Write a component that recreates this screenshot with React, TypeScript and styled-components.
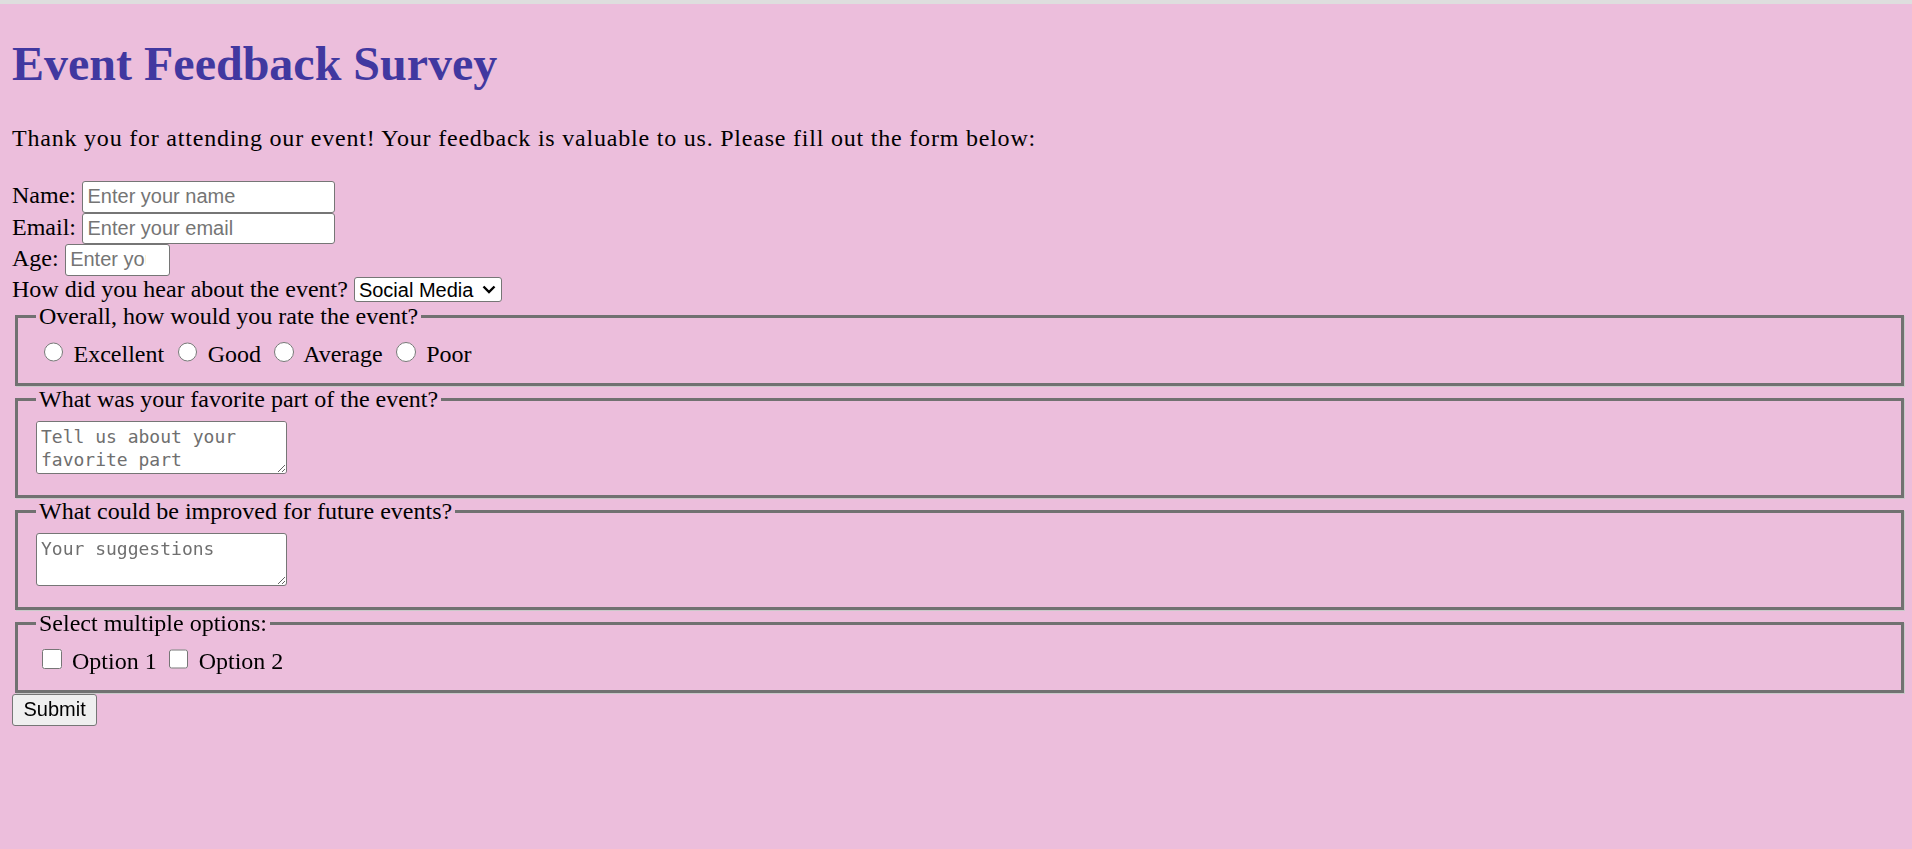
import React from "react";
import styled, { createGlobalStyle } from "styled-components";

const GlobalStyle = createGlobalStyle`
  html, body {
    margin: 0;
    padding: 0;
    background: #ecbedc;
    min-height: 100%;
  }
  body {
    font-family: "Liberation Serif", "Times New Roman", serif;
    font-size: 24px;
    color: #000;
  }
`;

const WindowEdge = styled.div`
  height: 4px;
  background: #dedede;
`;

const Page = styled.main`
  padding: 0 5px 40px 12px;
`;

const Title = styled.h1`
  margin: 32px 0;
  font-size: 48px;
  font-weight: bold;
  color: #4138a0;
  line-height: normal;
`;

const Intro = styled.p`
  margin: 24px 0 27px;
  line-height: 31px;
  letter-spacing: 0.79px;
`;

const Form = styled.form`
  margin: 0;
`;

const Row = styled.div`
  line-height: normal;
`;

const TextInput = styled.input<{ $w: number; $padRight?: number }>`
  box-sizing: border-box;
  width: ${(p) => p.$w}px;
  height: 31.5px;
  margin: 0;
  padding: 0 ${(p) => p.$padRight ?? 4}px 0 4.5px;
  font-family: "Liberation Sans", Arial, sans-serif;
  font-size: 20px;
  color: #000;
  background: #fff;
  border: 1.5px solid #767676;
  border-radius: 3px;
  vertical-align: baseline;
  -moz-appearance: textfield;
  &::placeholder {
    color: #757575;
  }
  &::-webkit-inner-spin-button,
  &::-webkit-outer-spin-button {
    -webkit-appearance: none;
    margin: 0;
  }
`;

const SelectWrap = styled.span`
  position: relative;
  display: inline-block;
`;

const Select = styled.select`
  box-sizing: border-box;
  appearance: none;
  width: 148px;
  height: 25.5px;
  margin: 0;
  padding: 0 26px 0 4px;
  font-family: "Liberation Sans", Arial, sans-serif;
  font-size: 20px;
  color: #000;
  background: #fff;
  border: 1.5px solid #767676;
  border-radius: 3px;
`;

const Chevron = styled.svg`
  position: absolute;
  right: 6px;
  top: 9px;
  width: 14px;
  height: 9px;
  pointer-events: none;
`;

const Group = styled.fieldset`
  margin: 0 3px;
  padding: 8px 18px 15px;
  border: 3px solid #717171;
  box-shadow: 1px 1px 0 #c9c9c9;
  min-inline-size: min-content;
`;

const Legend = styled.legend`
  padding: 0 3px;
  font-size: 24px;
  line-height: normal;
`;

const Choice = styled.input`
  width: 19.5px;
  height: 19.5px;
  margin: 4.5px 4.5px 0 7.5px;
  vertical-align: baseline;
`;

const Check = styled.input`
  width: 19.5px;
  height: 19.5px;
  margin: 4.5px 4.5px 4.5px 6px;
  vertical-align: baseline;
`;

const Choices = styled.div`
  line-height: normal;
`;

const AreaLine = styled.div`
  line-height: normal;
`;

const Area = styled.textarea`
  box-sizing: border-box;
  display: inline-block;
  width: 251px;
  height: 53px;
  margin: 0;
  padding: 3px 4px;
  font-family: "DejaVu Sans Mono", "Liberation Mono", monospace;
  font-size: 18px;
  line-height: 23px;
  color: #000;
  background: #fff;
  border: 1.5px solid #767676;
  border-radius: 3px;
  vertical-align: baseline;
  resize: both;
  &::placeholder {
    color: #6f6f6f;
  }
`;

const SubmitButton = styled.button`
  box-sizing: border-box;
  height: 31.5px;
  margin: 1.5px 0 0;
  padding: 0 10.5px;
  font-family: "Liberation Sans", Arial, sans-serif;
  font-size: 20px;
  color: #000;
  background: #efefef;
  border: 1.5px solid #767676;
  border-radius: 3px;
`;

export default function App() {
  return (
    <>
      <GlobalStyle />
      <WindowEdge />
      <Page>
        <Title>Event Feedback Survey</Title>
        <Intro>
          Thank you for attending our event! Your feedback is valuable to us. Please fill out the form below:
        </Intro>
        <Form onSubmit={(e) => e.preventDefault()}>
          <Row>
            Name: <TextInput $w={253} type="text" placeholder="Enter your name" />
          </Row>
          <Row>
            Email: <TextInput $w={253} type="email" placeholder="Enter your email" />
          </Row>
          <Row>
            Age: <TextInput $w={105} $padRight={23} type="number" placeholder="Enter your age" />
          </Row>
          <Row>
            How did you hear about the event?{" "}
            <SelectWrap>
              <Select defaultValue="social">
                <option value="social">Social Media</option>
                <option value="friend">Friend</option>
                <option value="email">Email</option>
                <option value="other">Other</option>
              </Select>
              <Chevron viewBox="0 0 14 9">
                <path d="M1.5 1.5 L7 7 L12.5 1.5" fill="none" stroke="#000" strokeWidth="2.4" />
              </Chevron>
            </SelectWrap>
          </Row>
          <Group>
            <Legend>Overall, how would you rate the event?</Legend>
            <Choices>
              <Choice type="radio" name="rating" /> Excellent{" "}
              <Choice type="radio" name="rating" /> Good{" "}
              <Choice type="radio" name="rating" /> Average{" "}
              <Choice type="radio" name="rating" /> Poor
            </Choices>
          </Group>
          <Group>
            <Legend>What was your favorite part of the event?</Legend>
            <AreaLine>
              <Area placeholder="Tell us about your favorite part" />
            </AreaLine>
          </Group>
          <Group>
            <Legend>What could be improved for future events?</Legend>
            <AreaLine>
              <Area placeholder="Your suggestions" />
            </AreaLine>
          </Group>
          <Group>
            <Legend>Select multiple options:</Legend>
            <Choices>
              <Check type="checkbox" /> Option 1{" "}
              <Check type="checkbox" /> Option 2
            </Choices>
          </Group>
          <SubmitButton type="submit">Submit</SubmitButton>
        </Form>
      </Page>
    </>
  );
}
